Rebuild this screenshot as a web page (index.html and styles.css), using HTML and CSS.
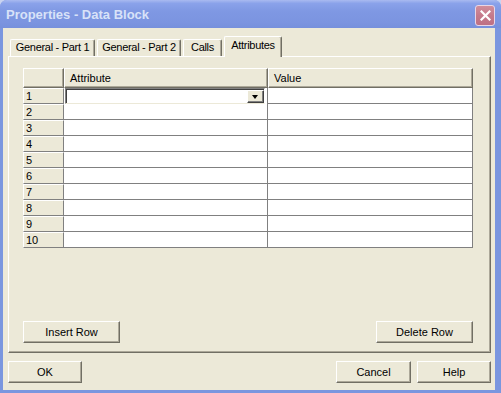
FILE: index.html
```html
<!DOCTYPE html>
<html lang="en">
<head>
  <meta charset="UTF-8" />
  <title>Properties - Data Block</title>
  <link rel="stylesheet" href="styles.css">
</head>
<body>
  <div class="window">
    <div class="titlebar">
      <span class="title">Properties - Data Block</span>
      <button class="close" aria-label="Close">
        <svg width="11" height="11" viewBox="0 0 11 11">
          <path d="M1.5 1.5 L9.5 9.5 M9.5 1.5 L1.5 9.5" stroke="#fff" stroke-width="2.2" stroke-linecap="square" />
        </svg>
      </button>
    </div>

    <div class="client">
      <!-- tab strip -->
      <div class="tabs">
        <div class="tab tab-1">General - Part 1</div>
        <div class="tab tab-2">General - Part 2</div>
        <div class="tab tab-3">Calls</div>
        <div class="tab tab-4 active">Attributes</div>
      </div>

      <div class="panel">
        <div class="grid">
          <div class="head corner"></div>
          <div class="head">Attribute</div>
          <div class="head">Value</div>

          <div class="rowhead">1</div>
          <div class="cell combo-cell">
            <div class="combo">
              <span class="caret"></span>
              <span class="drop"><span class="arrow"></span></span>
            </div>
          </div>
          <div class="cell"></div>

          <div class="rowhead">2</div><div class="cell"></div><div class="cell"></div>
          <div class="rowhead">3</div><div class="cell"></div><div class="cell"></div>
          <div class="rowhead">4</div><div class="cell"></div><div class="cell"></div>
          <div class="rowhead">5</div><div class="cell"></div><div class="cell"></div>
          <div class="rowhead">6</div><div class="cell"></div><div class="cell"></div>
          <div class="rowhead">7</div><div class="cell"></div><div class="cell"></div>
          <div class="rowhead">8</div><div class="cell"></div><div class="cell"></div>
          <div class="rowhead">9</div><div class="cell"></div><div class="cell"></div>
          <div class="rowhead">10</div><div class="cell"></div><div class="cell"></div>
        </div>

        <div class="panel-buttons">
          <button class="btn btn-wide">Insert Row</button>
          <button class="btn btn-wide">Delete Row</button>
        </div>
      </div>

      <div class="dialog-buttons">
        <button class="btn">OK</button>
        <div class="right-buttons">
          <button class="btn btn-cancel">Cancel</button>
          <button class="btn">Help</button>
        </div>
      </div>
    </div>
  </div>
</body>
</html>
```

FILE: styles.css
```css
* {
  box-sizing: border-box;
}

body {
  margin: 0;
  background: #c9d3f0;
  font-family: 'Liberation Sans', Arial, sans-serif;
  font-size: 11px;
  color: #000;
}

.window {
  width: 501px;
  height: 393px;
  background: #7a96df;
  border-radius: 7px 7px 0 0;
  display: flex;
  flex-direction: column;
  overflow: hidden;
}

/* title bar (inactive XP caption) */
.titlebar {
  height: 28px;
  flex: none;
  display: flex;
  align-items: center;
  justify-content: space-between;
  padding: 0 6px 0 6px;
  background: linear-gradient(180deg, #a9baf0 0%, #8aa2ea 12%, #7f98e3 40%, #7b94e0 80%, #7690dc 100%);
}

.title {
  font-weight: bold;
  font-size: 13px;
  color: #d8e2f8;
  margin-top: 1px;
}

.close {
  width: 20px;
  height: 21px;
  margin-top: 2px;
  padding: 0;
  border: 1px solid #e8d6e6;
  border-radius: 3px;
  background: linear-gradient(180deg, #d18e9c 0%, #c57a8b 50%, #bd7084 100%);
  display: flex;
  align-items: center;
  justify-content: center;
}

.client {
  flex: 1;
  margin: 0 6px 3px 3px;
  background: #ece9d8;
  padding: 8px 4px 7px 5px;
  display: flex;
  flex-direction: column;
}

/* tabs */
.tabs {
  height: 20px;
  display: flex;
  align-items: flex-end;
  gap: 2px;
  padding-left: 2px;
  position: relative;
  z-index: 2;
}

.tab {
  height: 17px;
  background: #ece9d8;
  border-top: 1px solid #fff;
  border-left: 1px solid #fff;
  border-right: 1px solid #716f64;
  border-radius: 2px 2px 0 0;
  box-shadow: inset -1px 0 #aca899;
  text-align: center;
  line-height: 15px;
  letter-spacing: -0.3px;
}

.tab-1 { width: 85px; }
.tab-2 { width: 84px; }
.tab-3 { width: 39px; }
.tab-4 { width: 58px; }

.tab.active {
  height: 21px;
  margin-bottom: -1px;
  line-height: 17px;
}

.panel {
  height: 297px;
  flex: none;
  border-top: 1px solid #fff;
  border-left: 1px solid #fff;
  border-right: 1px solid #716f64;
  border-bottom: 1px solid #716f64;
  box-shadow: inset -1px -1px #aca899;
  padding: 11px 17px 9px 14px;
  display: flex;
  flex-direction: column;
  justify-content: space-between;
}

/* grid */
.grid {
  display: grid;
  grid-template-columns: 41px 204px 205px;
  grid-template-rows: 20px repeat(10, 16px);
}

.head {
  background: #ece9d8;
  border-top: 1px solid #fff;
  border-left: 1px solid #fff;
  border-right: 1px solid #716f64;
  border-bottom: 1px solid #716f64;
  box-shadow: inset -1px -1px #aca899;
  padding: 3px 0 0 5px;
  line-height: 13px;
}

.rowhead {
  background: #ece9d8;
  border-top: 1px solid #fff;
  border-left: 1px solid #fff;
  border-right: 1px solid #808080;
  border-bottom: 1px solid #808080;
  padding-left: 2px;
  line-height: 14px;
}

.cell {
  background: #fff;
  border-right: 1px solid #808080;
  border-bottom: 1px solid #808080;
}

.combo-cell {
  padding: 0 2px 0 1px;
  border-bottom: none;
}

.combo {
  height: 16px;
  border-top: 1px solid #808080;
  border-left: 1px solid #808080;
  border-right: 1px solid #fff;
  border-bottom: 1px solid #ece9d8;
  box-shadow: inset 1px 1px #404040;
  display: flex;
  justify-content: space-between;
  align-items: stretch;
  background: #fff;
}

.caret {
  width: 1px;
  margin: 2px 0 2px 2px;
}

.drop {
  width: 17px;
  margin: 1px 0 0 0;
  background: #ece9d8;
  border-top: 1px solid #fff;
  border-left: 1px solid #fff;
  border-right: 1px solid #404040;
  border-bottom: 1px solid #404040;
  box-shadow: inset -1px -1px #808080;
  display: flex;
  align-items: center;
  justify-content: center;
}

.arrow {
  width: 0;
  height: 0;
  border-left: 3.5px solid transparent;
  border-right: 3.5px solid transparent;
  border-top: 4px solid #000;
  margin-left: -1px;
}

/* buttons */
.btn {
  height: 22px;
  width: 74px;
  padding: 0;
  font-family: 'Liberation Sans', Arial, sans-serif;
  font-size: 11px;
  color: #000;
  background: #ece9d8;
  border-top: 1px solid #fff;
  border-left: 1px solid #fff;
  border-right: 1px solid #716f64;
  border-bottom: 1px solid #716f64;
  box-shadow: inset -1px -1px #aca899;
}

.btn-wide {
  width: 97px;
}

.btn-cancel {
  width: 75px;
}

.panel-buttons {
  display: flex;
  justify-content: space-between;
}

.dialog-buttons {
  margin-top: 8px;
  display: flex;
  justify-content: space-between;
}

.right-buttons {
  display: flex;
  gap: 6px;
}
```
